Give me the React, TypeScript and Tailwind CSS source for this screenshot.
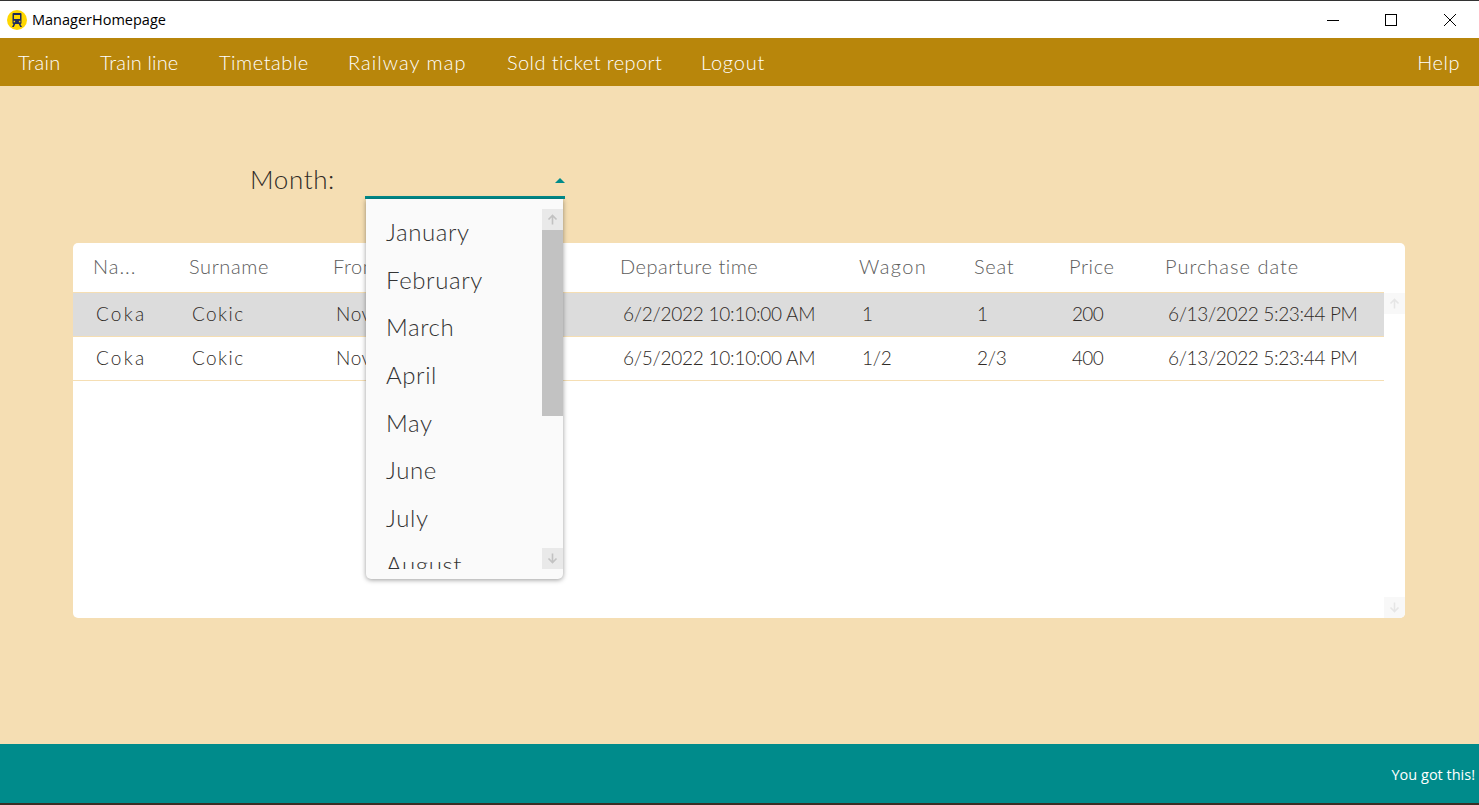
const navItems = [
  { label: "Train", width: "w-[82px]", tracking: "tracking-[0.25px]" },
  { label: "Train line", width: "w-[119px]", tracking: "tracking-[0.15px]" },
  { label: "Timetable", width: "w-[129px]", tracking: "tracking-[0.55px]" },
  { label: "Railway map", width: "w-[159px]", tracking: "tracking-[1.05px]" },
  { label: "Sold ticket report", width: "w-[194px]", tracking: "tracking-[0.4px]" },
  { label: "Logout", width: "w-[80px]", tracking: "tracking-[0.8px]" },
]

const months = ["January", "February", "March", "April", "May", "June", "July", "August"]

const columns = [
  { label: "Na...", width: "w-[96px]", tracking: "tracking-[1px]" },
  { label: "Surname", width: "w-[144px]", tracking: "tracking-[0.6px]" },
  { label: "From", width: "w-[287px]", tracking: "tracking-[0.6px]" },
  { label: "Departure time", width: "w-[239px]", tracking: "tracking-[0.5px]" },
  { label: "Wagon", width: "w-[115px]", tracking: "tracking-[1.4px]" },
  { label: "Seat", width: "w-[95px]", tracking: "tracking-[0.75px]" },
  { label: "Price", width: "w-[96px]", tracking: "tracking-[0.6px]" },
  { label: "Purchase date", width: "w-[190px]", tracking: "tracking-[1px]" },
]

// names are wider than the digits in the original font
const cellTracking = [
  "tracking-[2.2px]",
  "tracking-[1.4px]",
  "tracking-[0.6px]",
  "tracking-[-0.25px]",
  "tracking-[-0.3px]",
  "tracking-[-0.3px]",
  "tracking-[-0.7px]",
  "tracking-[-0.35px]",
]

const rows = [
  ["Coka", "Cokic", "Novi Sad", "6/2/2022 10:10:00 AM", "1", "1", "200", "6/13/2022 5:23:44 PM"],
  ["Coka", "Cokic", "Novi Sad", "6/5/2022 10:10:00 AM", "1/2", "2/3", "400", "6/13/2022 5:23:44 PM"],
]

function TrainIcon() {
  return (
    <svg width="20" height="20" viewBox="0 0 20 20">
      <circle cx="10" cy="10" r="10" fill="#FFD700" />
      <rect x="5.5" y="3" width="9" height="11" rx="1" fill="#1F2A5C" />
      <rect x="7" y="5" width="6" height="4" fill="#FFD700" />
      <rect x="6.6" y="10.8" width="1.5" height="1.5" fill="#FFD700" />
      <rect x="11.9" y="10.8" width="1.5" height="1.5" fill="#FFD700" />
      <path d="M6.5 14h1.8l-1.5 3H5zM11.7 14h1.8l1.5 3h-1.8z" fill="#1F2A5C" />
    </svg>
  )
}

function ArrowIcon({ down, color }: { down?: boolean; color: string }) {
  return (
    <svg width="11" height="11" viewBox="0 0 11 11" fill="none" stroke={color} strokeWidth="1.6" className={down ? "rotate-180" : ""}>
      <path d="M5.5 10.5V1.5M1.5 5.5l4-4 4 4" />
    </svg>
  )
}

function TitleBar() {
  return (
    <div className="h-[37px] bg-white flex items-center shrink-0">
      <div className="ml-[7px]">
        <TrainIcon />
      </div>
      <span className="ml-[5px] mt-[1px] text-[14.5px] text-black font-['Open_Sans',sans-serif]">ManagerHomepage</span>
      <div className="ml-auto flex items-center">
        <svg width="12" height="12" viewBox="0 0 12 12" className="mr-[46px]" stroke="#000" strokeWidth="1">
          <path d="M0 6.5h12" />
        </svg>
        <svg width="12" height="12" viewBox="0 0 12 12" className="mr-[47px]" fill="none" stroke="#000" strokeWidth="1">
          <rect x="0.5" y="0.5" width="11" height="11" />
        </svg>
        <svg width="12" height="12" viewBox="0 0 12 12" className="mr-[23px]" fill="none" stroke="#000" strokeWidth="1">
          <path d="M0 0l12 12M12 0L0 12" />
        </svg>
      </div>
    </div>
  )
}

function NavBar() {
  return (
    <div className="h-[48px] bg-[#B8860B] flex items-center pl-[18px] pr-[19px] shrink-0 text-white text-[20px] font-light">
      {navItems.map((item) => (
        <span key={item.label} className={`${item.width} ${item.tracking} shrink-0 whitespace-nowrap -mt-[1px]`}>
          {item.label}
        </span>
      ))}
      <span className="ml-auto tracking-[0.5px]">Help</span>
    </div>
  )
}

function MonthDropdown() {
  return (
    <div className="absolute left-[1px] top-[37px] w-[197px] h-[380px] bg-[#FAFAFA] rounded-b-[5px] shadow-[0_1px_5px_rgba(0,0,0,0.4)] overflow-hidden">
      <div className="h-[370px] overflow-hidden pt-[9.4px]">
        {months.map((m) => (
          <div key={m} className="h-[47.6px] pl-[20px] flex items-center text-[24px] font-light text-[#333] tracking-[0.6px]">
            {m}
          </div>
        ))}
      </div>
      <div className="absolute right-0 top-[10px] w-[21px] h-[360px] flex flex-col">
        <div className="h-[21px] bg-[#E9E9E9] flex items-center justify-center">
          <ArrowIcon color="#C2C2C2" />
        </div>
        <div className="h-[186px] bg-[#C2C2C2]" />
        <div className="flex-1" />
        <div className="h-[21px] bg-[#E9E9E9] flex items-center justify-center">
          <ArrowIcon down color="#C2C2C2" />
        </div>
      </div>
    </div>
  )
}

function TicketTable() {
  return (
    <div className="ml-[73px] mr-[74px] h-[375px] bg-white rounded-[5px] flex relative">
      <div className="w-[1311px]">
        <div className="h-[49px] flex items-center pl-[20px] pb-[4px] text-[20px] font-light text-[#5c5c5c]">
          {columns.map((col) => (
            <span key={col.label} className={`${col.width} ${col.tracking} shrink-0 whitespace-nowrap`}>
              {col.label}
            </span>
          ))}
        </div>
        {rows.map((row, i) => (
          <div
            key={i}
            className={`flex items-center pl-[23px] border-b border-[#F5DEB3] text-[19px] font-light text-[#2f2a26] ${i === 0 ? "bg-[#DCDCDC] border-t h-[45px]" : "h-[44px]"}`}
          >
            {row.map((cell, j) => (
              <span key={j} className={`${columns[j].width} ${cellTracking[j]} shrink-0 whitespace-nowrap`}>
                {cell}
              </span>
            ))}
          </div>
        ))}
      </div>
      <div className="flex-1 flex flex-col justify-between pt-[50px]">
        <div className="h-[21px] bg-[#F8F8F8] flex items-center justify-center">
          <ArrowIcon color="#E6E6E6" />
        </div>
        <div className="h-[21px] bg-[#F8F8F8] flex items-center justify-center rounded-br-[5px]">
          <ArrowIcon down color="#E6E6E6" />
        </div>
      </div>
    </div>
  )
}

export default function App() {
  return (
    <div className="w-[1479px] h-[805px] flex flex-col overflow-hidden bg-[#3A2E25] font-['Lato',sans-serif]">
      <div className="h-px bg-[#333] shrink-0" />
      <TitleBar />
      <NavBar />
      <main className="flex-1 bg-[#F5DEB3] flex flex-col">
        <div className="h-[157px] pl-[250px] pt-[76px] flex items-start relative z-10">
          <span className="w-[115px] -mt-px text-[26px] leading-[36px] font-light text-[#2f2a26] tracking-[0.6px]">Month:</span>
          <div className="relative w-[200px] h-[37px] border-b-[3px] border-[#008B8B]">
            <div className="absolute right-0 top-[16px] w-0 h-0 border-x-[5px] border-x-transparent border-b-[5px] border-b-[#008B8B]" />
            <MonthDropdown />
          </div>
        </div>
        <TicketTable />
      </main>
      <footer className="h-[59px] bg-[#008B8B] shrink-0 flex items-center justify-end pr-[4px] pt-[2px] text-white text-[14.5px] font-['Open_Sans',sans-serif]">
        You got this!
      </footer>
      <div className="h-[2px] shrink-0" />
    </div>
  )
}
